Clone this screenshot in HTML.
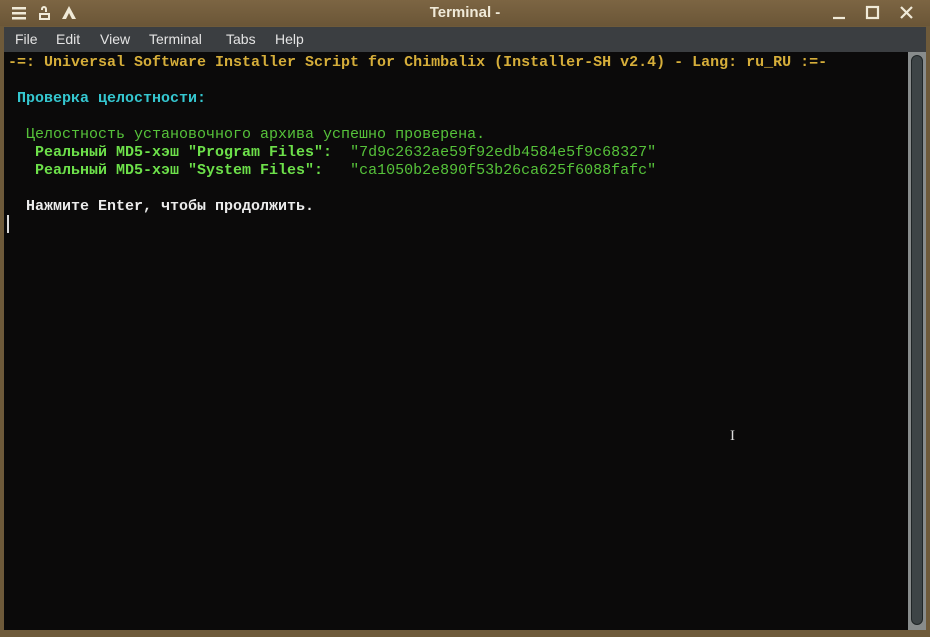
<!DOCTYPE html><html><head><meta charset="utf-8"><style>
*{margin:0;padding:0;box-sizing:border-box}
body{width:930px;height:637px;background:#6e5a3a;position:relative;overflow:hidden;font-family:"Liberation Sans",sans-serif}
.title{position:absolute;left:0;top:0;width:930px;height:26px;background:linear-gradient(#7c6543,#6b5637);color:#f0ead8;font-weight:bold;font-size:15px;text-align:center;line-height:26px}
.menu{position:absolute;left:4px;top:27px;width:922px;height:25px;background:#3b3e41;color:#e4e4e4;font-size:14px;line-height:24px}
.menu span{position:absolute;top:0}
.term{position:absolute;left:4px;top:52px;width:904px;height:578px;background:#0b0a0a}
.sb{position:absolute;left:908px;top:52px;width:18px;height:578px;background:#888c8c}
.sb div{position:absolute;left:3px;top:3px;width:12px;height:570px;background:#3d4446;border-radius:6px;border:1px solid #1f2526}
pre{position:absolute;left:8px;top:54px;font-family:"Liberation Mono",monospace;font-size:15px;line-height:18px;font-weight:bold;white-space:pre}
.y{color:#d6ae3a}.c{color:#35c7d0}.g{color:#56c23a;font-weight:normal}.G{color:#6de04a}.w{color:#ececec}.n{color:#56c23a;font-weight:normal}
</style></head><body>
<div class="title">Terminal -</div>
<svg style="position:absolute;left:10px;top:5px" width="70" height="16"><g fill="#f0ead8"><rect x="2" y="2" width="14" height="2.5"/><rect x="2" y="7" width="14" height="2.5"/><rect x="2" y="12" width="14" height="2.5"/><path d="M34 1a3 3 0 0 1 3 3v3h-2v-3a1 1 0 0 0-2 0v1h-2v-1a3 3 0 0 1 3-3zM29 8h11v7h-11z M31 10v3h7v-3z"/><path d="M59 1l7 13h-4l-3-6-3 6h-4z"/></g></svg>
<svg style="position:absolute;left:830px;top:5px" width="94" height="16"><g stroke="#f0ead8" stroke-width="2.2" fill="none"><path d="M3 13h12"/><rect x="37" y="2" width="11" height="11"/><path d="M71 2l11 11M82 2l-11 11"/></g></svg>
<div class="menu"><span style="left:11px">File</span><span style="left:52px">Edit</span><span style="left:96px">View</span><span style="left:145px">Terminal</span><span style="left:222px">Tabs</span><span style="left:271px">Help</span></div>
<div class="term"></div>
<div class="sb"><div></div></div>
<pre><span class="y">-=: Universal Software Installer Script for Chimbalix (Installer-SH v2.4) - Lang: ru_RU :=-</span>

<span class="c"> Проверка целостности:</span>

<span class="g">  Целостность установочного архива успешно проверена.</span>
<span class="G">   Реальный MD5-хэш "Program Files":  </span><span class="n">"7d9c2632ae59f92edb4584e5f9c68327"</span>
<span class="G">   Реальный MD5-хэш "System Files":   </span><span class="n">"ca1050b2e890f53b26ca625f6088fafc"</span>

<span class="w">  Нажмите Enter, чтобы продолжить.</span>
</pre>
<div style="position:absolute;left:7px;top:215px;width:2px;height:18px;background:#ddd"></div>
<div style="position:absolute;left:730px;top:428px;color:#ddd;font-size:15px;font-family:'Liberation Serif',serif">I</div>
</body></html>
